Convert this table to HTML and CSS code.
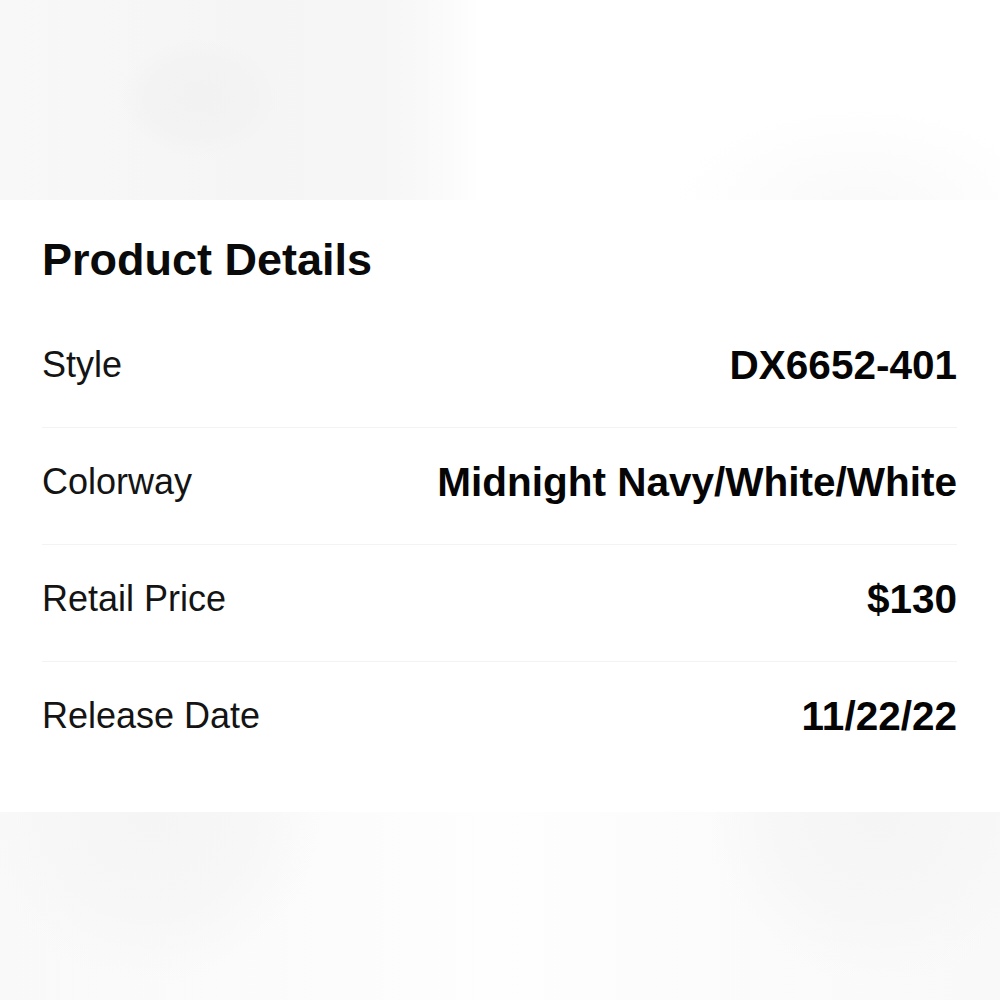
FILE: index.html
```html
<!DOCTYPE html>
<html lang="en">
<head>
<meta charset="utf-8">
<title>Product Details</title>
<link rel="stylesheet" href="styles.css">
</head>
<body>
<div class="band band-top"></div>
<section class="card">
  <h1 class="title">Product Details</h1>
  <div class="row">
    <span class="label">Style</span>
    <span class="value">DX6652-401</span>
  </div>
  <div class="row">
    <span class="label">Colorway</span>
    <span class="value">Midnight Navy/White/White</span>
  </div>
  <div class="row">
    <span class="label">Retail Price</span>
    <span class="value">$130</span>
  </div>
  <div class="row last">
    <span class="label">Release Date</span>
    <span class="value">11/22/22</span>
  </div>
</section>
<div class="band band-bottom"></div>
</body>
</html>
```
FILE: styles.css
```css
html, body {
  margin: 0;
  padding: 0;
  background: #ffffff;
}
body {
  width: 1000px;
  height: 1000px;
  overflow: hidden;
  font-family: "Liberation Sans", Arial, sans-serif;
  display: flex;
  flex-direction: column;
}
.band-top {
  height: 200px;
  flex: none;
  background:
    radial-gradient(ellipse 80px 60px at 200px 98px, #f2f2f2 0%, #f3f3f3 65%, rgba(244,244,244,0) 100%),
    radial-gradient(ellipse 190px 110px at 860px 215px, #f9f9f9 0%, rgba(250,250,250,0) 100%),
    linear-gradient(90deg, #f8f8f8 0%, #f5f5f5 25%, #f6f6f6 38%, #fbfbfb 45%, #ffffff 48%, #ffffff 100%);
}
.band-bottom {
  flex: 1;
  background:
    radial-gradient(ellipse 170px 170px at 150px 0px, #f5f5f5 0%, #f7f7f7 60%, rgba(248,248,248,0) 100%),
    radial-gradient(ellipse 170px 170px at 880px 0px, #f5f5f5 0%, #f7f7f7 60%, rgba(248,248,248,0) 100%),
    linear-gradient(90deg, #f9f9f9 0%, #fcfcfc 35%, #fefefe 50%, #fcfcfc 65%, #f9f9f9 100%);
}
.card {
  flex: none;
  height: 612px;
  box-sizing: border-box;
  padding: 34px 43px 0 42px;
  background: #ffffff;
}
.title {
  margin: 0 0 25px 0;
  font-size: 45px;
  font-weight: 700;
  line-height: 52px;
  color: #0a0a0a;
}
.row {
  display: flex;
  justify-content: space-between;
  align-items: flex-start;
  padding: 33px 0 38px 0;
  border-bottom: 1px solid #f3f3f3;
}
.row.last {
  border-bottom: none;
}
.label {
  font-size: 36px;
  line-height: 41px;
  color: #141414;
}
.value {
  font-size: 40.5px;
  line-height: 47px;
  font-weight: 700;
  color: #050505;
  margin-top: -2px;
}
```
